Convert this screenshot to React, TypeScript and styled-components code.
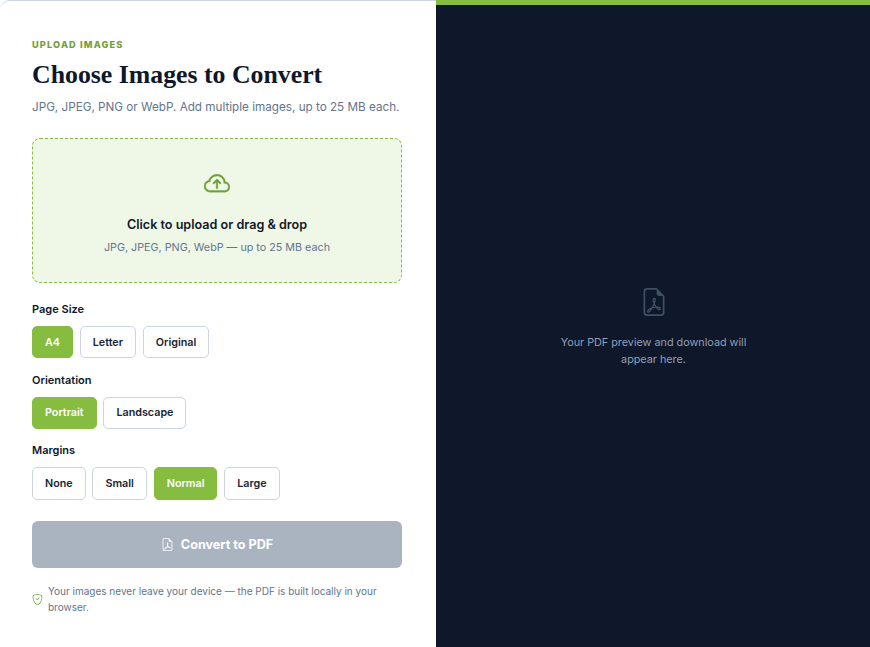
import React from 'react';
import styled, { createGlobalStyle } from 'styled-components';
import { BsCloudArrowUp, BsFileEarmarkPdf, BsShieldCheck } from 'react-icons/bs';

const GlobalStyle = createGlobalStyle`
  html, body {
    margin: 0;
    padding: 0;
    background: #fff;
    font-family: Inter, "Liberation Sans", sans-serif;
  }
  * { box-sizing: border-box; }
`;

const Card = styled.div`
  width: 870px;
  height: 647px;
  display: grid;
  grid-template-columns: 436px 1fr;
  overflow: hidden;
  background: #fff;
`;

const FormPanel = styled.section`
  padding: 38px 34px 0 32px;
  display: flex;
  flex-direction: column;
  border-top: 1px solid #cbd5e1;
  border-top-left-radius: 10px;
`;

const Eyebrow = styled.div`
  font-size: 9.2px;
  line-height: 12px;
  font-weight: 800;
  letter-spacing: 1.15px;
  color: #6f9f3a;
`;

const Title = styled.h1`
  margin: 7px 0 0;
  font-family: "Liberation Serif", serif;
  font-size: 25.8px;
  line-height: 34px;
  font-weight: 700;
  color: #0f172a;
`;

const Subtitle = styled.p`
  margin: 5px 0 0;
  font-size: 11.7px;
  line-height: 20px;
  color: #64748b;
`;

const DropZone = styled.div`
  margin: 21px 0 4.5px;
  height: 145px;
  border: 1px dashed #8abb42;
  border-radius: 8px;
  background: #eff8e7;
  display: flex;
  flex-direction: column;
  align-items: center;
  padding-top: 32px;
`;

const CloudIcon = styled(BsCloudArrowUp)`
  width: 26px;
  height: 26px;
  color: #6f9f3a;
  stroke-width: 0.25;
`;

const DropTitle = styled.div`
  margin-top: 19px;
  font-size: 12.6px;
  line-height: 18px;
  font-weight: 600;
  color: #0f172a;
`;

const DropHint = styled.div`
  margin-top: 6px;
  font-size: 10.75px;
  line-height: 16px;
  color: #64748b;
`;

const Group = styled.div`
  margin-top: 13.5px;
`;

const Label = styled.div`
  font-size: 11px;
  line-height: 16px;
  font-weight: 600;
  color: #0f172a;
`;

const Options = styled.div`
  margin-top: 9px;
  display: flex;
  gap: 6.8px;
`;

const Option = styled.button<{ $active?: boolean; $tall?: boolean }>`
  height: ${({ $tall }) => ($tall ? '33px' : '32px')};
  padding: 0 12px;
  border-radius: 5px;
  border: 1px solid ${({ $active }) => ($active ? '#86bc3f' : '#cbd5e1')};
  background: ${({ $active }) => ($active ? '#86bc3f' : '#fff')};
  color: ${({ $active }) => ($active ? '#fff' : '#1a2436')};
  font-family: Inter, "Liberation Sans", sans-serif;
  font-size: 10.75px;
  font-weight: 600;
`;

const Convert = styled.button`
  margin-top: 21px;
  height: 47px;
  width: 100%;
  border: 0;
  border-radius: 6px;
  background: #aab4c0;
  color: #fff;
  font-family: Inter, "Liberation Sans", sans-serif;
  font-size: 12.6px;
  font-weight: 700;
  display: flex;
  align-items: center;
  justify-content: center;
  gap: 7px;
`;

const Note = styled.div`
  margin-top: 15px;
  display: flex;
  align-items: center;
  gap: 5px;
  font-size: 10px;
  line-height: 16px;
  color: #64748b;
`;

const NoteIcon = styled(BsShieldCheck)`
  flex: none;
  width: 11px;
  height: 11px;
  color: #6f9f3a;
`;

const PreviewPanel = styled.section`
  background: #0f172a;
  border-top: 5px solid #86bc3f;
  display: flex;
  flex-direction: column;
  align-items: center;
  justify-content: center;
  padding: 3px 0 0 1px;
`;

const PdfIcon = styled(BsFileEarmarkPdf)`
  width: 28px;
  height: 28px;
  color: #3f4f66;
`;

const PreviewText = styled.p`
  margin: 18px 0 0;
  width: 200px;
  text-align: center;
  font-size: 10.8px;
  line-height: 17px;
  color: #8fa0b6;
`;

const groups = [
  { label: 'Page Size', items: ['A4', 'Letter', 'Original'], active: 'A4' },
  { label: 'Orientation', items: ['Portrait', 'Landscape'], active: 'Portrait' },
  { label: 'Margins', items: ['None', 'Small', 'Normal', 'Large'], active: 'Normal', tall: true },
];

export default function App() {
  return (
    <>
      <GlobalStyle />
      <Card>
        <FormPanel>
          <Eyebrow>UPLOAD IMAGES</Eyebrow>
          <Title>Choose Images to Convert</Title>
          <Subtitle>JPG, JPEG, PNG or WebP. Add multiple images, up to 25 MB each.</Subtitle>
          <DropZone>
            <CloudIcon />
            <DropTitle>Click to upload or drag &amp; drop</DropTitle>
            <DropHint>JPG, JPEG, PNG, WebP — up to 25 MB each</DropHint>
          </DropZone>
          {groups.map((group) => (
            <Group key={group.label}>
              <Label>{group.label}</Label>
              <Options>
                {group.items.map((item) => (
                  <Option key={item} $active={item === group.active} $tall={group.tall}>
                    {item}
                  </Option>
                ))}
              </Options>
            </Group>
          ))}
          <Convert>
            <BsFileEarmarkPdf size={13} />
            Convert to PDF
          </Convert>
          <Note>
            <NoteIcon />
            <span>Your images never leave your device — the PDF is built locally in your browser.</span>
          </Note>
        </FormPanel>
        <PreviewPanel>
          <PdfIcon />
          <PreviewText>Your PDF preview and download will appear here.</PreviewText>
        </PreviewPanel>
      </Card>
    </>
  );
}
